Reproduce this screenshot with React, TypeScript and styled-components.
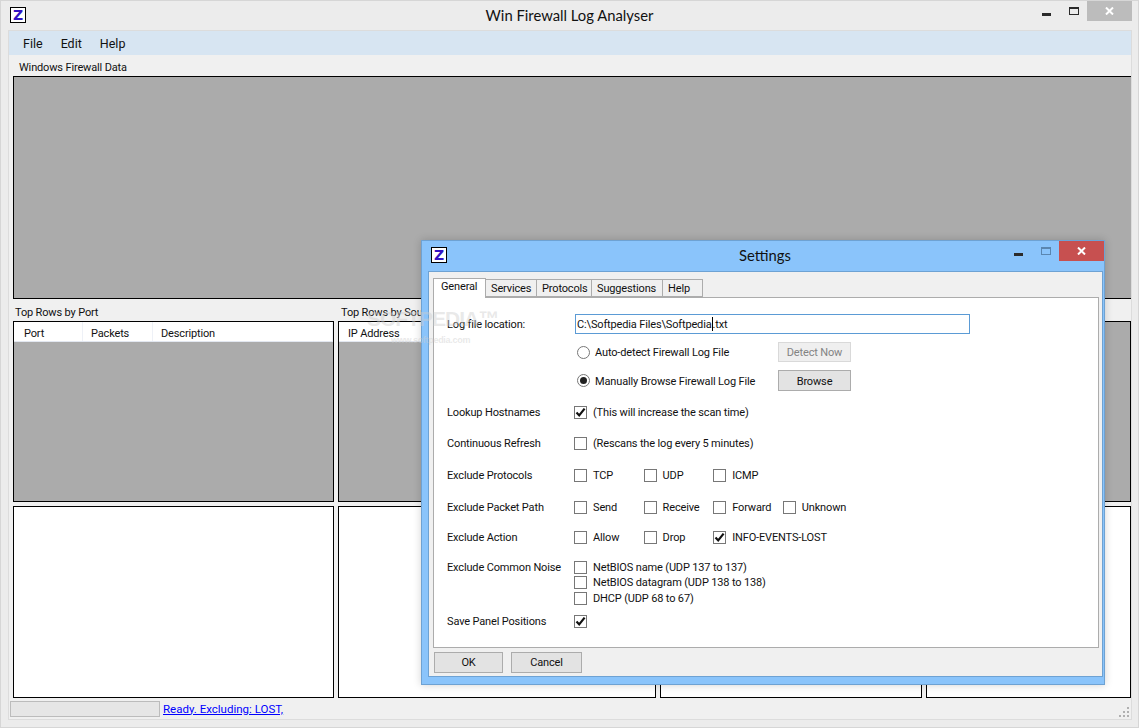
import React from "react";
import styled, { createGlobalStyle } from "styled-components";

const UI_FONT = `Roboto, "Noto Sans", sans-serif`;
const TITLE_FONT = `Lato, "Noto Sans", sans-serif`;

const GlobalStyle = createGlobalStyle`
  html, body {
    margin: 0;
    padding: 0;
    overflow: hidden;
    background: #ececec;
  }
  * {
    box-sizing: border-box;
  }
`;

const Window = styled.div`
  position: relative;
  width: 1139px;
  height: 728px;
  display: flex;
  flex-direction: column;
  background: #ececec;
  border: 1px solid #d6d6d6;
  font-family: ${UI_FONT};
  font-size: 11px;
  letter-spacing: -0.15px;
  color: #111;
  overflow: hidden;
`;

const TitleBar = styled.div<{ $height: number }>`
  position: relative;
  flex: none;
  height: ${(p) => p.$height}px;
  display: flex;
  align-items: center;
  justify-content: center;
  padding-bottom: 2px;
`;

const AppIcon = styled.span`
  position: absolute;
  left: 9px;
  top: 6px;
  width: 16px;
  height: 16px;
  display: flex;
  align-items: center;
  justify-content: center;
  background: #fff;
  border: 1px solid #000;
  color: #3312c4;
  font-family: "DejaVu Sans", sans-serif;
  font-size: 14px;
  font-weight: 700;
  line-height: 1;
`;

const TitleText = styled.div<{ $shift?: number }>`
  font-family: ${TITLE_FONT};
  font-size: 14.8px;
  letter-spacing: 0;
  color: #111;
  padding-left: ${(p) => p.$shift ?? 0}px;
`;

const Controls = styled.div<{ $right: number }>`
  position: absolute;
  right: ${(p) => p.$right}px;
  top: 0;
  display: flex;
  align-items: flex-start;
`;

const CaptionButton = styled.div`
  width: 27px;
  height: 20px;
  display: flex;
  align-items: center;
  justify-content: center;
`;

const CloseButton = styled.div<{ $bg: string }>`
  width: 45px;
  height: 20px;
  display: flex;
  align-items: center;
  justify-content: center;
  background: ${(p) => p.$bg};
`;

const Client = styled.div`
  flex: none;
  width: 1124px;
  height: 690px;
  margin-left: 7px;
  display: flex;
  flex-direction: column;
  background: #f0f0f0;
  border: 1px solid #dcdcdc;
`;

const MenuBar = styled.div`
  flex: none;
  height: 24px;
  display: flex;
  align-items: center;
  gap: 18px;
  padding-left: 14px;
  background: #d7e5f2;
  font-size: 12.5px;
  letter-spacing: 0;
`;

const Workspace = styled.div`
  flex: 1;
  display: flex;
  flex-direction: column;
  padding: 0 0 0 4px;
`;

const SectionLabel = styled.div`
  height: 21px;
  line-height: 26px;
  padding-left: 6px;
  white-space: nowrap;
`;

const GrayPanel = styled.div`
  flex: none;
  height: 223px;
  background: #ababab;
  border-top: 1px solid #000;
  border-left: 1px solid #000;
  border-bottom: 1px solid #000;
`;

const PanelRow = styled.div<{ $height: number }>`
  flex: none;
  height: ${(p) => p.$height}px;
  display: grid;
  grid-template-columns: 321px 318px 262px 205px;
  column-gap: 4px;
`;

const LabelRow = styled.div`
  flex: none;
  height: 22px;
  display: grid;
  grid-template-columns: 321px 318px 262px 205px;
  column-gap: 4px;
  line-height: 27px;
  white-space: nowrap;
`;

const RowLabel = styled.div<{ $pad: number }>`
  padding-left: ${(p) => p.$pad}px;
`;

const ListPanel = styled.div<{ $filled: boolean }>`
  display: flex;
  flex-direction: column;
  background: ${(p) => (p.$filled ? "#ababab" : "#fff")};
  border: 1px solid #000;
`;

const ListHeader = styled.div`
  flex: none;
  height: 20px;
  display: flex;
  background: #fff;
  border-bottom: 1px solid #e2e7f0;
`;

const ListColumn = styled.div<{ $width: number; $pad: number }>`
  width: ${(p) => p.$width}px;
  padding-left: ${(p) => p.$pad}px;
  line-height: 23px;
  border-right: 1px solid #eef1f7;
  white-space: nowrap;
`;

const Spacer = styled.div`
  height: 4px;
  flex: none;
`;

const StatusBar = styled.div`
  flex: 1;
  position: relative;
  display: flex;
  align-items: center;
  margin-left: -4px;
  padding-left: 1px;
  gap: 3px;
`;

const Progress = styled.div`
  width: 150px;
  height: 16px;
  background: #e6e6e6;
  border: 1px solid #bcbcbc;
`;

const StatusLink = styled.a`
  color: #0000ff;
  font-size: 11.5px;
  letter-spacing: 0;
  text-decoration: underline;
  white-space: nowrap;
`;

const Grip = styled.svg`
  position: absolute;
  right: 1px;
  bottom: 1px;
`;

const Dialog = styled.div`
  position: absolute;
  left: 420px;
  top: 239px;
  width: 684px;
  height: 445px;
  display: flex;
  flex-direction: column;
  background: #8ac4fb;
  border: 1px solid #6ea2d3;
  box-shadow: 0 0 8px rgba(0, 0, 0, 0.18);
`;

const DialogClient = styled.div`
  flex: none;
  width: 675px;
  height: 406px;
  margin-left: 6px;
  display: flex;
  flex-direction: column;
  padding: 0 3px 0 4px;
  background: #f0f0f0;
  border: 1px solid #6ea2d3;
`;

const TabStrip = styled.div`
  flex: none;
  height: 25px;
  display: flex;
  align-items: flex-end;
  position: relative;
  z-index: 1;
`;

const Tab = styled.div<{ $active?: boolean; $width: number }>`
  width: ${(p) => p.$width}px;
  height: ${(p) => (p.$active ? 20 : 18)}px;
  margin-bottom: ${(p) => (p.$active ? -1 : 0)}px;
  padding-left: ${(p) => (p.$active ? 7 : 5)}px;
  line-height: ${(p) => (p.$active ? 16 : 18)}px;
  background: ${(p) => (p.$active ? "#fff" : "#f0f0f0")};
  border: 1px solid #acacac;
  border-left-width: ${(p) => (p.$active ? 1 : 0)}px;
  border-bottom-width: ${(p) => (p.$active ? 0 : 1)}px;
  white-space: nowrap;
`;

const TabPanel = styled.div`
  flex: none;
  height: 351px;
  padding-left: 13px;
  background: #fff;
  border: 1px solid #acacac;
`;

const FormRow = styled.div<{ $top: number; $height?: number }>`
  height: ${(p) => p.$height ?? 16}px;
  margin-top: ${(p) => p.$top}px;
  display: grid;
  grid-template-columns: 127px 1fr;
  align-items: center;
`;

const FieldLabel = styled.div`
  white-space: nowrap;
  line-height: 15px;
`;

const PathInput = styled.div`
  width: 395px;
  height: 20px;
  margin-left: 1px;
  padding-left: 1px;
  line-height: 19px;
  border: 1px solid #5b9bd5;
  background: #fff;
  white-space: nowrap;
`;

const Caret = styled.span`
  display: inline-block;
  width: 1px;
  height: 14px;
  margin-bottom: -3px;
  background: #000;
`;

const RadioLine = styled.div`
  display: flex;
  align-items: center;
  padding-left: 3px;
`;

const RadioCircle = styled.span<{ $on?: boolean }>`
  flex: none;
  width: 13px;
  height: 13px;
  display: flex;
  align-items: center;
  justify-content: center;
  margin-right: 5px;
  border: 1px solid #777;
  border-radius: 50%;
  background: #fff;

  &::after {
    content: "";
    width: 7px;
    height: 7px;
    border-radius: 50%;
    background: ${(p) => (p.$on ? "#222" : "transparent")};
  }
`;

const RadioText = styled.span`
  width: 183px;
  padding-top: 1px;
  white-space: nowrap;
`;

const PushButton = styled.div<{ $width: number; $off?: boolean }>`
  flex: none;
  width: ${(p) => p.$width}px;
  height: 100%;
  display: flex;
  align-items: center;
  justify-content: center;
  padding-top: 1px;
  background: ${(p) => (p.$off ? "#efefef" : "#e3e3e3")};
  border: 1px solid ${(p) => (p.$off ? "#d9d9d9" : "#acacac")};
  color: ${(p) => (p.$off ? "#838383" : "#111")};
`;

const RadioRow = styled(FormRow)`
  > ${RadioLine} {
    grid-column: 2;
    height: 100%;
  }
`;

const Options = styled.div`
  display: flex;
`;

const Option = styled.div<{ $wide?: boolean }>`
  width: ${(p) => (p.$wide ? "auto" : "69.6px")};
  display: flex;
  align-items: center;
  white-space: nowrap;
`;

const Box = styled.span`
  flex: none;
  width: 13px;
  height: 13px;
  display: flex;
  align-items: center;
  justify-content: center;
  margin-right: 6px;
  background: #fff;
  border: 1px solid #777;
`;

const NoiseRow = styled.div`
  height: 15.5px;
  display: flex;
  align-items: center;
  white-space: nowrap;
`;

const NoiseLabel = styled(FieldLabel)`
  align-self: start;
  padding-top: 1px;
`;

const DialogFooter = styled.div`
  flex: 1;
  display: flex;
  align-items: center;
  gap: 8px;
  padding-left: 1px;
`;

const FooterButton = styled(PushButton)`
  height: 21px;
`;

const Watermark = styled.div`
  position: absolute;
  left: 366px;
  top: 305px;
  pointer-events: none;
  display: flex;
  flex-direction: column;
  align-items: flex-start;
  color: rgba(205, 205, 205, 0.45);
  font-family: "Liberation Sans", sans-serif;
  letter-spacing: 0;
`;

const WatermarkBig = styled.div`
  font-size: 21px;
  font-weight: 700;
  letter-spacing: -1px;
  line-height: 26px;
  white-space: nowrap;
`;

const WatermarkSmall = styled.div`
  font-size: 9px;
  font-weight: 700;
  letter-spacing: -0.3px;
  margin-top: 3px;
  padding-left: 24px;
`;

const MinimizeSlot = styled.svg`
  margin-top: 7px;
`;

const CheckMark = () => (
  <svg width="11" height="11" viewBox="0 0 11 11">
    <path d="M1.5 5.5 L4.2 8.4 L9.6 1.6" fill="none" stroke="#111" strokeWidth="2.2" />
  </svg>
);

const Check = ({ on }: { on?: boolean }) => <Box>{on && <CheckMark />}</Box>;

const Minimize = () => (
  <MinimizeSlot width="9" height="3" viewBox="0 0 9 3">
    <rect width="9" height="3" fill="#2b2b2b" />
  </MinimizeSlot>
);

const Maximize = ({ color }: { color: string }) => (
  <svg width="10" height="8" viewBox="0 0 10 8">
    <rect x="0.5" y="0.5" width="9" height="7" fill="none" stroke={color} />
    <rect width="10" height="2" fill={color} />
  </svg>
);

const CloseGlyph = () => (
  <svg width="9" height="8" viewBox="0 0 9 8">
    <path d="M1 0.5 L8 7.5 M8 0.5 L1 7.5" stroke="#fff" strokeWidth="2" />
  </svg>
);

const GripDots = () => (
  <Grip width="11" height="11" viewBox="0 0 11 11" fill="#b0b0b0">
    <rect x="8" y="0" width="2" height="2" />
    <rect x="4" y="4" width="2" height="2" />
    <rect x="8" y="4" width="2" height="2" />
    <rect x="0" y="8" width="2" height="2" />
    <rect x="4" y="8" width="2" height="2" />
    <rect x="8" y="8" width="2" height="2" />
  </Grip>
);

const App = () => {
  return (
    <>
      <GlobalStyle />
      <Window>
        <TitleBar $height={29}>
          <AppIcon>Z</AppIcon>
          <TitleText>Win Firewall Log Analyser</TitleText>
          <Controls $right={6}>
            <CaptionButton>
              <Minimize />
            </CaptionButton>
            <CaptionButton>
              <Maximize color="#2b2b2b" />
            </CaptionButton>
            <CloseButton $bg="#bcbcbc">
              <CloseGlyph />
            </CloseButton>
          </Controls>
        </TitleBar>
        <Client>
          <MenuBar>
            <span>File</span>
            <span>Edit</span>
            <span>Help</span>
          </MenuBar>
          <Workspace>
            <SectionLabel>Windows Firewall Data</SectionLabel>
            <GrayPanel />
            <LabelRow>
              <RowLabel $pad={2}>Top Rows by Port</RowLabel>
              <RowLabel $pad={3}>Top Rows by Source</RowLabel>
            </LabelRow>
            <PanelRow $height={181}>
              <ListPanel $filled>
                <ListHeader>
                  <ListColumn $width={69} $pad={10}>Port</ListColumn>
                  <ListColumn $width={70} $pad={8}>Packets</ListColumn>
                  <ListColumn $width={180} $pad={8}>Description</ListColumn>
                </ListHeader>
              </ListPanel>
              <ListPanel $filled>
                <ListHeader>
                  <ListColumn $width={316} $pad={9}>IP Address</ListColumn>
                </ListHeader>
              </ListPanel>
              <ListPanel $filled />
              <ListPanel $filled />
            </PanelRow>
            <Spacer />
            <PanelRow $height={192}>
              <ListPanel $filled={false} />
              <ListPanel $filled={false} />
              <ListPanel $filled={false} />
              <ListPanel $filled={false} />
            </PanelRow>
            <StatusBar>
              <Progress />
              <StatusLink href="#">Ready. Excluding: LOST,</StatusLink>
              <GripDots />
            </StatusBar>
          </Workspace>
        </Client>

        <Dialog>
          <TitleBar $height={30}>
            <AppIcon>Z</AppIcon>
            <TitleText $shift={4}>Settings</TitleText>
            <Controls $right={0}>
              <CaptionButton>
                <Minimize />
              </CaptionButton>
              <CaptionButton>
                <Maximize color="#5a86b0" />
              </CaptionButton>
              <CloseButton $bg="#c75050">
                <CloseGlyph />
              </CloseButton>
            </Controls>
          </TitleBar>
          <DialogClient>
            <TabStrip>
              <Tab $active $width={53}>General</Tab>
              <Tab $width={51}>Services</Tab>
              <Tab $width={55}>Protocols</Tab>
              <Tab $width={71}>Suggestions</Tab>
              <Tab $width={40}>Help</Tab>
            </TabStrip>
            <TabPanel>
              <FormRow $top={16} $height={20}>
                <FieldLabel>Log file location:</FieldLabel>
                <PathInput>
                  C:\Softpedia Files\Softpedia
                  <Caret />
                  .txt
                </PathInput>
              </FormRow>
              <RadioRow $top={8} $height={20}>
                <RadioLine>
                  <RadioCircle />
                  <RadioText>Auto-detect Firewall Log File</RadioText>
                  <PushButton $width={73} $off>Detect Now</PushButton>
                </RadioLine>
              </RadioRow>
              <RadioRow $top={8} $height={21}>
                <RadioLine>
                  <RadioCircle $on />
                  <RadioText>Manually Browse Firewall Log File</RadioText>
                  <PushButton $width={73}>Browse</PushButton>
                </RadioLine>
              </RadioRow>
              <FormRow $top={13}>
                <FieldLabel>Lookup Hostnames</FieldLabel>
                <Option $wide>
                  <Check on />
                  (This will increase the scan time)
                </Option>
              </FormRow>
              <FormRow $top={15}>
                <FieldLabel>Continuous Refresh</FieldLabel>
                <Option $wide>
                  <Check />
                  (Rescans the log every 5 minutes)
                </Option>
              </FormRow>
              <FormRow $top={16}>
                <FieldLabel>Exclude Protocols</FieldLabel>
                <Options>
                  <Option><Check />TCP</Option>
                  <Option><Check />UDP</Option>
                  <Option><Check />ICMP</Option>
                </Options>
              </FormRow>
              <FormRow $top={16}>
                <FieldLabel>Exclude Packet Path</FieldLabel>
                <Options>
                  <Option><Check />Send</Option>
                  <Option><Check />Receive</Option>
                  <Option><Check />Forward</Option>
                  <Option><Check />Unknown</Option>
                </Options>
              </FormRow>
              <FormRow $top={14}>
                <FieldLabel>Exclude Action</FieldLabel>
                <Options>
                  <Option><Check />Allow</Option>
                  <Option><Check />Drop</Option>
                  <Option $wide><Check on />INFO-EVENTS-LOST</Option>
                </Options>
              </FormRow>
              <FormRow $top={14} $height={47}>
                <NoiseLabel>Exclude Common Noise</NoiseLabel>
                <div>
                  <NoiseRow><Check />NetBIOS name (UDP 137 to 137)</NoiseRow>
                  <NoiseRow><Check />NetBIOS datagram (UDP 138 to 138)</NoiseRow>
                  <NoiseRow><Check />DHCP (UDP 68 to 67)</NoiseRow>
                </div>
              </FormRow>
              <FormRow $top={7}>
                <FieldLabel>Save Panel Positions</FieldLabel>
                <Option $wide><Check on /></Option>
              </FormRow>
            </TabPanel>
            <DialogFooter>
              <FooterButton $width={69}>OK</FooterButton>
              <FooterButton $width={71}>Cancel</FooterButton>
            </DialogFooter>
          </DialogClient>
        </Dialog>

        <Watermark>
          <WatermarkBig>SOFTPEDIA™</WatermarkBig>
          <WatermarkSmall>www.softpedia.com</WatermarkSmall>
        </Watermark>
      </Window>
    </>
  );
};

export default App;
